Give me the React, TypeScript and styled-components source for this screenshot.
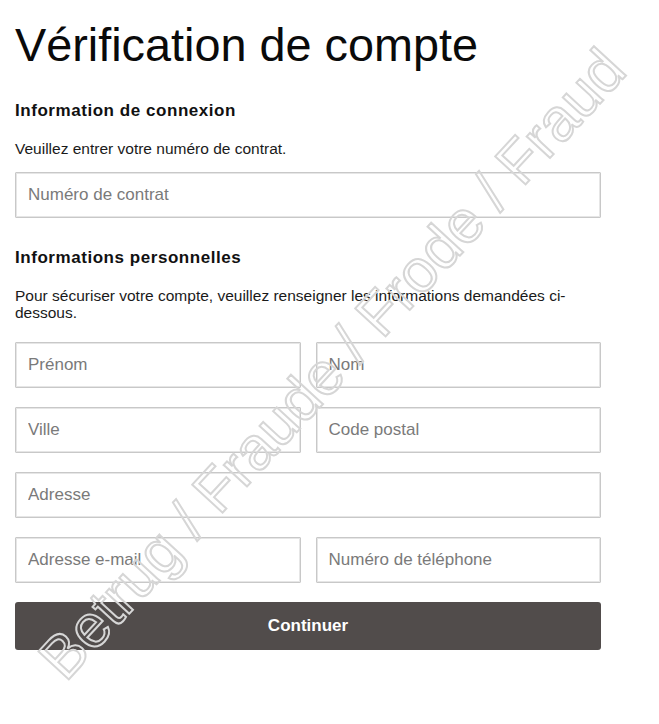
import React from 'react';
import styled, { createGlobalStyle } from 'styled-components';

const GlobalStyle = createGlobalStyle`
  * {
    box-sizing: border-box;
  }
  body {
    margin: 0;
    background: #ffffff;
    font-family: 'Liberation Sans', Arial, sans-serif;
    color: #111111;
  }
`;

const personalRows: Array<Array<string>> = [
  ['Prénom', 'Nom'],
  ['Ville', 'Code postal'],
  ['Adresse'],
  ['Adresse e-mail', 'Numéro de téléphone'],
];

const App = () => {
  return (
    <>
      <GlobalStyle />
      <Page>
        <Title>Vérification de compte</Title>

        <Section>
          <SubTitle>Information de connexion</SubTitle>
          <Hint>Veuillez entrer votre numéro de contrat.</Hint>
          <Field placeholder="Numéro de contrat" />
        </Section>

        <Section $top={30}>
          <SubTitle>Informations personnelles</SubTitle>
          <Hint>Pour sécuriser votre compte, veuillez renseigner les informations demandées ci-dessous.</Hint>
          <FieldGrid>
            {personalRows.map((row) => (
              <FieldRow key={row.join('-')} $cols={row.length}>
                {row.map((label) => (
                  <Field key={label} placeholder={label} />
                ))}
              </FieldRow>
            ))}
          </FieldGrid>
        </Section>

        <SubmitButton type="button">Continuer</SubmitButton>

        <Watermark>Betrug / Fraude / Frode / Fraud</Watermark>
      </Page>
    </>
  );
};

const Page = styled.div`
  position: relative;
  width: 659px;
  height: 724px;
  padding: 19px 0 0 15px;
  overflow: hidden;
`;

const Title = styled.h1`
  margin: 0;
  width: 600px;
  font-size: 46.8px;
  font-weight: 400;
  line-height: 52px;
  color: #0a0a0a;
`;

const Section = styled.div<{ $top?: number }>`
  margin-top: ${(props) => props.$top ?? 30}px;
  width: 586px;
  display: flex;
  flex-direction: column;
`;

const SubTitle = styled.h2`
  margin: 0;
  font-size: 17px;
  font-weight: 700;
  letter-spacing: 0.55px;
  line-height: 20px;
  color: #111111;
`;

const Hint = styled.p`
  margin: 19px 0 0;
  font-size: 15.5px;
  line-height: 17px;
  color: #1a1a1a;
`;

const Field = styled.input`
  display: block;
  width: 100%;
  height: 46px;
  margin: 0;
  padding: 0 12px;
  border: 1px solid #c8c8c8;
  box-shadow: inset 0 0 0 1px #e6e6e6;
  border-radius: 1px;
  background: #ffffff;
  font-family: 'Liberation Sans', Arial, sans-serif;
  font-size: 17px;
  color: #333333;
  outline: none;

  &::placeholder {
    color: #7a7a7a;
  }

  ${Hint} + & {
    margin-top: 15px;
  }
`;

const FieldGrid = styled.div`
  margin-top: 21px;
  display: flex;
  flex-direction: column;
  gap: 19px;
`;

const FieldRow = styled.div<{ $cols: number }>`
  display: grid;
  grid-template-columns: repeat(${(props) => props.$cols}, 1fr);
  gap: 15px;
`;

const SubmitButton = styled.button`
  display: block;
  margin-top: 19px;
  width: 586px;
  height: 48px;
  border: none;
  border-radius: 3px;
  background: #514c4b;
  color: #ffffff;
  font-family: 'Liberation Sans', Arial, sans-serif;
  font-size: 17px;
  font-weight: 700;
  cursor: pointer;
`;

const Watermark = styled.div`
  position: absolute;
  left: 332px;
  top: 364px;
  transform: translate(-50%, -50%) rotate(-47.3deg);
  white-space: nowrap;
  font-family: 'Liberation Sans', Arial, sans-serif;
  font-size: 60px;
  font-weight: 400;
  color: transparent;
  -webkit-text-stroke: 2px #d6d6d6;
  pointer-events: none;
  user-select: none;
`;

export default App;
